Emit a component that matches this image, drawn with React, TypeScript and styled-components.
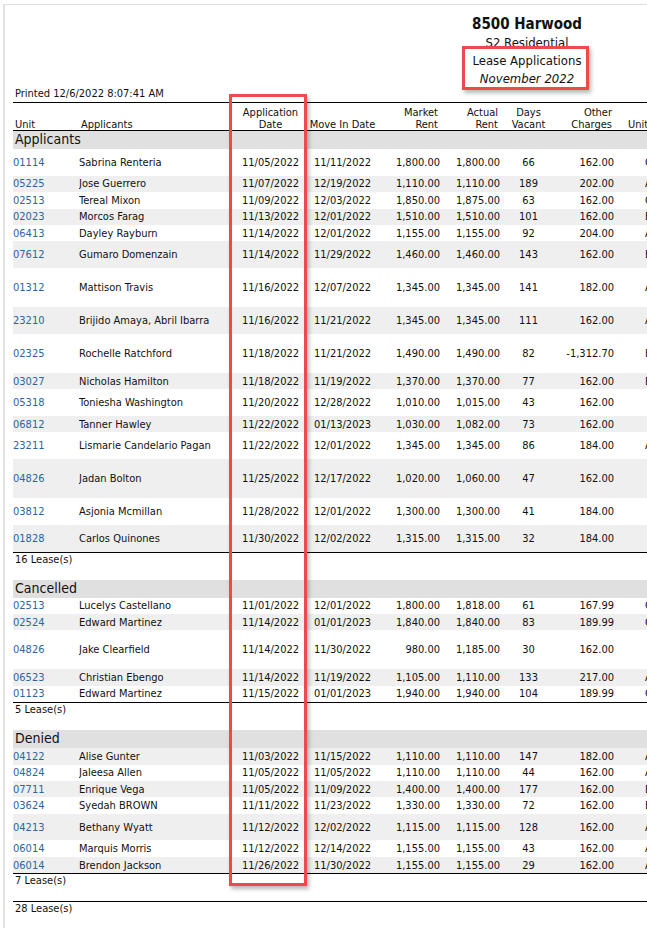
import React from 'react';
import styled, { createGlobalStyle, css } from 'styled-components';

const FONT = `"DejaVu Sans Condensed", "DejaVu Sans", Verdana, sans-serif`;

const GlobalStyle = createGlobalStyle`
  html, body { margin: 0; padding: 0; background: #fff; overflow: hidden; }
  body { font-family: ${FONT}; font-stretch: condensed; color: #111; }
`;

type Align = 'left' | 'center' | 'right';

const COLS = '66px 158px 67px 77px 59px 60px 57px 57px 86px 1fr';

const gridRow = css`
  display: grid;
  grid-template-columns: ${COLS};
`;

const Screen = styled.div`
  position: relative;
  width: 647px;
  height: 928px;
  overflow: hidden;
`;

const Sheet = styled.div`
  margin: 4px 0 0 3px;
  border-top: 1px solid #dedede;
  border-left: 2px solid #e2e2e2;
  padding-left: 8px;
  width: 1100px;
  min-height: 923px;
  box-sizing: border-box;
`;

const Report = styled.div`
  width: 1028px;
`;

const TitleBlock = styled.div`
  text-align: center;
  padding-top: 9px;
  color: #111;
`;

const Property = styled.div`
  font-weight: bold;
  font-size: 15px;
  line-height: 20px;
`;

const TitleLine = styled.div<{ $italic?: boolean }>`
  font-size: 13px;
  line-height: 18px;
  font-style: ${(p) => (p.$italic ? 'italic' : 'normal')};
`;

const Printed = styled.div`
  font-size: 11px;
  line-height: 12px;
  padding-left: 2px;
  margin-bottom: 2px;
`;

const HeaderRow = styled.div`
  ${gridRow};
  border-top: 1px solid #000;
  border-bottom: 1px solid #000;
  padding-top: 4px;
  align-items: end;
  font-size: 11px;
  line-height: 11.5px;
  color: #111;
`;

const Cell = styled.div<{ $align: Align; $pl?: number; $pr?: number }>`
  text-align: ${(p) => p.$align};
  padding-left: ${(p) => p.$pl ?? 0}px;
  padding-right: ${(p) => p.$pr ?? 0}px;
  white-space: nowrap;
  overflow: hidden;
`;

const UnitLink = styled.span`
  color: #2b65a0;
`;

const SectionBand = styled.div`
  height: 18px;
  background: #e0e0e0;
  font-size: 14px;
  line-height: 17px;
  padding-left: 2px;
  color: #111;
`;

const ROW_HEIGHTS: Record<number, number> = { 1: 16.4, 2: 26.75, 3: 39 };

const DataRow = styled.div<{ $lines: number; $alt: boolean }>`
  ${gridRow};
  align-items: center;
  height: ${(p) => ROW_HEIGHTS[p.$lines]}px;
  background: ${(p) => (p.$alt ? '#efefef' : 'transparent')};
  font-size: 11px;
  line-height: 13px;
  color: #111;
`;

const CountFooter = styled.div`
  border-top: 1px solid #000;
  font-size: 11px;
  line-height: 13px;
  padding: 0 0 14px 2px;
  color: #111;
`;

const Callout = styled.div<{ $x: number; $y: number; $w: number; $h: number }>`
  position: absolute;
  left: ${(p) => p.$x}px;
  top: ${(p) => p.$y}px;
  width: ${(p) => p.$w}px;
  height: ${(p) => p.$h}px;
  box-sizing: border-box;
  border: 3px solid #ef4a4a;
  box-shadow: 2px 3px 4px rgba(0, 0, 0, 0.28);
  pointer-events: none;
`;

type Row = [string, string, string, string, string, string, string, string, string, number];

const applicants: Row[] = [
  ['01114', 'Sabrina Renteria', '11/05/2022', '11/11/2022', '1,800.00', '1,800.00', '66', '162.00', 'C1', 2],
  ['05225', 'Jose Guerrero', '11/07/2022', '12/19/2022', '1,110.00', '1,110.00', '189', '202.00', 'A2', 1],
  ['02513', 'Tereal Mixon', '11/09/2022', '12/03/2022', '1,850.00', '1,875.00', '63', '162.00', 'C1', 1],
  ['02023', 'Morcos Farag', '11/13/2022', '12/01/2022', '1,510.00', '1,510.00', '101', '162.00', 'B1', 1],
  ['06413', 'Dayley Rayburn', '11/14/2022', '12/01/2022', '1,155.00', '1,155.00', '92', '204.00', 'A2', 1],
  ['07612', 'Gumaro Domenzain', '11/14/2022', '11/29/2022', '1,460.00', '1,460.00', '143', '162.00', 'B1', 2],
  ['01312', 'Mattison Travis', '11/16/2022', '12/07/2022', '1,345.00', '1,345.00', '141', '182.00', 'A1', 3],
  ['23210', 'Brijido Amaya, Abril Ibarra', '11/16/2022', '11/21/2022', '1,345.00', '1,345.00', '111', '162.00', 'A1', 2],
  ['02325', 'Rochelle Ratchford', '11/18/2022', '11/21/2022', '1,490.00', '1,490.00', '82', '-1,312.70', 'B2', 3],
  ['03027', 'Nicholas Hamilton', '11/18/2022', '11/19/2022', '1,370.00', '1,370.00', '77', '162.00', 'B1', 1],
  ['05318', 'Toniesha Washington', '11/20/2022', '12/28/2022', '1,010.00', '1,015.00', '43', '162.00', '', 2],
  ['06812', 'Tanner Hawley', '11/22/2022', '01/13/2023', '1,030.00', '1,082.00', '73', '162.00', '', 1],
  ['23211', 'Lismarie Candelario Pagan', '11/22/2022', '12/01/2022', '1,345.00', '1,345.00', '86', '184.00', 'A1', 2],
  ['04826', 'Jadan Bolton', '11/25/2022', '12/17/2022', '1,020.00', '1,060.00', '47', '162.00', '', 3],
  ['03812', 'Asjonia Mcmillan', '11/28/2022', '12/01/2022', '1,300.00', '1,300.00', '41', '184.00', '', 2],
  ['01828', 'Carlos Quinones', '11/30/2022', '12/02/2022', '1,315.00', '1,315.00', '32', '184.00', '', 2],
];

const cancelled: Row[] = [
  ['02513', 'Lucelys Castellano', '11/01/2022', '12/01/2022', '1,800.00', '1,818.00', '61', '167.99', 'C1', 1],
  ['02524', 'Edward Martinez', '11/14/2022', '01/01/2023', '1,840.00', '1,840.00', '83', '189.99', 'C1', 1],
  ['04826', 'Jake Clearfield', '11/14/2022', '11/30/2022', '980.00', '1,185.00', '30', '162.00', '', 3],
  ['06523', 'Christian Ebengo', '11/14/2022', '11/19/2022', '1,105.00', '1,110.00', '133', '217.00', 'A2', 1],
  ['01123', 'Edward Martinez', '11/15/2022', '01/01/2023', '1,940.00', '1,940.00', '104', '189.99', 'C1', 1],
];

const denied: Row[] = [
  ['04122', 'Alise Gunter', '11/03/2022', '11/15/2022', '1,110.00', '1,110.00', '147', '182.00', 'A2', 1],
  ['04824', 'Jaleesa Allen', '11/05/2022', '11/05/2022', '1,110.00', '1,110.00', '44', '162.00', 'A2', 1],
  ['07711', 'Enrique Vega', '11/05/2022', '11/09/2022', '1,400.00', '1,400.00', '177', '162.00', 'B1', 1],
  ['03624', 'Syedah BROWN', '11/11/2022', '11/23/2022', '1,330.00', '1,330.00', '72', '162.00', 'B1', 1],
  ['04213', 'Bethany Wyatt', '11/12/2022', '12/02/2022', '1,115.00', '1,115.00', '128', '162.00', 'A2', 2],
  ['06014', 'Marquis Morris', '11/12/2022', '12/14/2022', '1,155.00', '1,155.00', '43', '162.00', 'A2', 1],
  ['06014', 'Brendon Jackson', '11/26/2022', '11/30/2022', '1,155.00', '1,155.00', '29', '162.00', 'A2', 1],
];

const sections: { title: string; rows: Row[] }[] = [
  { title: 'Applicants', rows: applicants },
  { title: 'Cancelled', rows: cancelled },
  { title: 'Denied', rows: denied },
];

function DataLine({ row, alt }: { row: Row; alt: boolean }) {
  const [unit, name, appDate, moveIn, market, actual, days, other, type, lines] = row;
  return (
    <DataRow $lines={lines} $alt={alt}>
      <Cell $align="left"><UnitLink>{unit}</UnitLink></Cell>
      <Cell $align="left">{name}</Cell>
      <Cell $align="center">{appDate}</Cell>
      <Cell $align="center">{moveIn}</Cell>
      <Cell $align="right">{market}</Cell>
      <Cell $align="right">{actual}</Cell>
      <Cell $align="center">{days}</Cell>
      <Cell $align="right">{other}</Cell>
      <Cell $align="left" $pl={31}>{type}</Cell>
      <Cell $align="left" />
    </DataRow>
  );
}

export default function App() {
  let counter = 0;
  const total = sections.reduce((n, s) => n + s.rows.length, 0);
  return (
    <Screen>
      <GlobalStyle />
      <Sheet>
        <Report>
          <TitleBlock>
            <Property>8500 Harwood</Property>
            <TitleLine>S2 Residential</TitleLine>
            <TitleLine>Lease Applications</TitleLine>
            <TitleLine $italic>November 2022</TitleLine>
          </TitleBlock>
          <Printed>Printed 12/6/2022 8:07:41 AM</Printed>
          <HeaderRow>
            <Cell $align="left" $pl={2}>Unit</Cell>
            <Cell $align="left" $pl={2}>Applicants</Cell>
            <Cell $align="center">Application<br />Date</Cell>
            <Cell $align="center">Move In Date</Cell>
            <Cell $align="right" $pr={2}>Market<br />Rent</Cell>
            <Cell $align="right" $pr={2}>Actual<br />Rent</Cell>
            <Cell $align="center">Days<br />Vacant</Cell>
            <Cell $align="right" $pr={2}>Other<br />Charges</Cell>
            <Cell $align="left" $pl={14}>Unit Type</Cell>
            <Cell $align="left" />
          </HeaderRow>
          {sections.map((s) => (
            <section key={s.title}>
              <SectionBand>{s.title}</SectionBand>
              {s.rows.map((r) => {
                const alt = counter % 2 === 1;
                counter += 1;
                return <DataLine key={counter} row={r} alt={alt} />;
              })}
              <CountFooter>{s.rows.length} Lease(s)</CountFooter>
            </section>
          ))}
          <CountFooter>{total} Lease(s)</CountFooter>
        </Report>
      </Sheet>
      <Callout $x={462} $y={46} $w={127} $h={44} />
      <Callout $x={229} $y={94} $w={78} $h={792} />
    </Screen>
  );
}
